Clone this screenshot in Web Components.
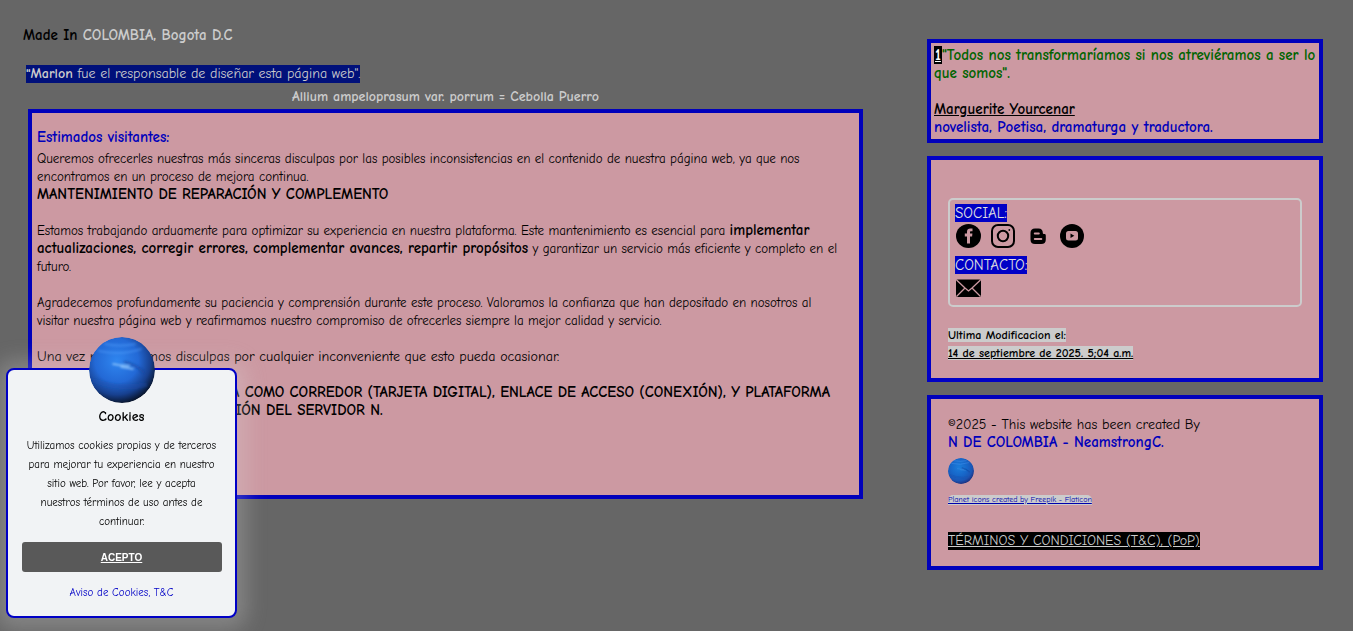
<!DOCTYPE html>
<html lang="es">
<head>
<meta charset="utf-8">
<meta name="viewport" content="width=device-width, initial-scale=1">
<title>N DE COLOMBIA - NeamstrongC.</title>
<style>
  :root {
    --blue: #0000bb;
    --pink: #cc99a2;
    --silver: #cccccc;
    --font: "Comic Sans MS", "Comic Neue", Lato, sans-serif;
  }
  body {
    margin: 0;
    background: #666;
    color: #000;
    font: 14px/18px var(--font);
  }
</style>
</head>
<body>
<page-layout>
  <intro-header slot="main"></intro-header>
  <notice-article slot="main"></notice-article>
  <quote-card slot="aside"></quote-card>
  <social-card slot="aside"></social-card>
  <credits-card slot="aside"></credits-card>
</page-layout>
<cookie-card></cookie-card>

<script>
const define = (name, html) => {
  const template = document.createElement("template");
  template.innerHTML = html;
  customElements.define(name, class extends HTMLElement {
    constructor() {
      super();
      this.attachShadow({ mode: "open" }).append(template.content.cloneNode(true));
    }
  });
};

define("page-layout", `
<style>
  :host { display: grid; grid-template-columns: minmax(0, 1fr) 396px; gap: 64px; align-items: start; padding: 26px 30px 26px 28px; }
  main { min-width: 0; }
  aside { display: flex; flex-direction: column; gap: 13px; padding-top: 13px; }
</style>
<main><slot name="main"></slot></main>
<aside><slot name="aside"></slot></aside>`);

define("framed-box", `
<style>
  :host { display: block; border: 4px solid var(--blue); background: var(--pink); }
</style>
<slot></slot>`);

define("intro-header", `
<style>
  :host { display: block; color: var(--silver); }
  p, h1 { margin: 0; font-size: 14px; line-height: 18px; }
  .origin { margin: 0 0 21px -5px; font-size: 15px; font-weight: bold; }
  .origin span { color: #000; }
  .author { margin-left: -2px; }
  mark { display: inline-block; background: #00107a; color: var(--silver); }
  h1 { padding: 5px 0 3px; text-align: center; }
</style>
<p class="origin"><span>Made In</span> COLOMBIA, Bogota D.C</p>
<p class="author"><mark><b>"Marlon</b> fue el responsable de diseñar esta página web".</mark></p>
<h1>Allium ampeloprasum var. porrum = Cebolla Puerro</h1>`);

define("notice-article", `
<style>
  :host { display: block; }
  framed-box { padding: 15px 12px 75px 5px; }
  h2 { margin: 0 0 4px; font-size: 15px; line-height: 18px; color: var(--blue); }
  p { margin: 0 0 18px; font-size: 13px; }
  p.apology { font-size: 14px; }
  b { font-size: 15px; line-height: 14px; }
  p:last-child { margin: 0; }
</style>
<framed-box>
  <h2>Estimados visitantes:</h2>
  <p>Queremos ofrecerles nuestras más sinceras disculpas por las posibles inconsistencias en el contenido de nuestra página web, ya que nos encontramos en un proceso de mejora continua.<br><b>MANTENIMIENTO DE REPARACIÓN Y COMPLEMENTO</b></p>
  <p>Estamos trabajando arduamente para optimizar su experiencia en nuestra plataforma. Este mantenimiento es esencial para <b>implementar actualizaciones, corregir errores, complementar avances, repartir propósitos</b> y garantizar un servicio más eficiente y completo en el futuro.</p>
  <p>Agradecemos profundamente su paciencia y comprensión durante este proceso. Valoramos la confianza que han depositado en nosotros al visitar nuestra página web y reafirmamos nuestro compromiso de ofrecerles siempre la mejor calidad y servicio.</p>
  <p class="apology">Una vez más, pedimos disculpas por cualquier inconveniente que esto pueda ocasionar.</p>
  <p><b>UNA PÁGINA WEB SE UTILIZA COMO CORREDOR (TARJETA DIGITAL), ENLACE DE ACCESO (CONEXIÓN), Y PLATAFORMA PARA NUESTRA ADMINISTRACIÓN DEL SERVIDOR N.</b></p>
</framed-box>`);

define("quote-card", `
<style>
  :host { display: block; font-size: 15px; font-weight: bold; }
  framed-box { padding: 3px; }
  blockquote { margin: 0 0 18px; color: #006400; }
  .number { display: inline-block; padding: 0 1px; background: #000; color: #fff; text-decoration: underline; }
  p { margin: 0; color: var(--blue); }
  a { color: #000; }
</style>
<framed-box>
  <blockquote><span class="number">1</span>"Todos nos transformaríamos si nos atreviéramos a ser lo que somos".</blockquote>
  <p><a href="#yourcenar">Marguerite Yourcenar</a><br>novelista, Poetisa, dramaturga y traductora.</p>
</framed-box>`);

define("social-card", `
<style>
  :host { display: block; --blue: #0000c6; }
  framed-box { padding: 38px 17px 16px; }
  section { border: 2px solid var(--silver); border-radius: 5px; padding: 4px 5px; margin-bottom: 19px; }
  h3 { margin: 0; font-weight: normal; font-size: 15px; line-height: 18px; }
  h3 span { display: inline-block; background: var(--blue); color: #e0e0e0; }
  nav { display: flex; gap: 9px; padding: 2px 0 7px; }
  nav.mail { padding: 2px 0 0; }
  a { display: block; height: 25px; color: #000; }
  svg { display: block; width: 26px; height: 25px; }
  p { margin: 0; font-size: 12px; line-height: 18px; font-weight: bold; }
  p span { background: var(--silver); }
</style>
<framed-box>
  <section>
    <h3><span>SOCIAL:</span></h3>
    <nav aria-label="Social">
      <a href="#facebook" aria-label="Facebook"><svg viewBox="0 0 26 25"><ellipse cx="13.500" cy="12" rx="12.500" ry="12"/><path d="M12 19.500v-7H9.800v-3H12V7.800C12 5.500 13.300 4.500 15.300 4.500H17.500v2.700h-1.400c-.9 0-1.100.4-1.100 1.200V9.500h2.400l-.3 3H15v7z" fill="#cc99a2"/></svg></a>
      <a href="#instagram" aria-label="Instagram"><svg viewBox="0 0 26 25" fill="none" stroke="#000" stroke-width="2"><rect x="2" y="1" width="22" height="22" rx="6"/><circle cx="13" cy="12" r="5.200"/><circle cx="19.300" cy="6" r=".9" fill="#000" stroke="none"/></svg></a>
      <a href="#blogger" aria-label="Blogger"><svg viewBox="0 0 26 25"><path d="M5.500 9c0-2.800 1.500-4.500 4.500-4.500h3.500c3 0 4.300 1.800 4.300 4.200 0 1.200.6 1.300 1.500 1.300 1.200 0 1.500.7 1.500 1.700V15.500c0 3-1.600 4.500-4.600 4.500H10c-3 0-4.500-1.500-4.500-4.500z"/><path d="M9.800 9.400h4M9.800 15.100h6.500" stroke="#cc99a2" stroke-width="2" stroke-linecap="round"/></svg></a>
      <a href="#youtube" aria-label="YouTube"><svg viewBox="0 0 26 25"><circle cx="12" cy="12" r="12"/><rect x="6" y="7" width="12" height="9.500" rx="2.500" fill="#cc99a2"/><path d="M10.500 9.500v4.500l3.800-2.200z"/></svg></a>
    </nav>
    <h3><span>CONTACTO:</span></h3>
    <nav class="mail" aria-label="Contacto">
      <a href="#correo" aria-label="Correo"><svg viewBox="0 0 26 25"><rect x="1" y="3.500" width="25" height="17.500" rx="1.500"/><path d="M1.500 4 10 12 13.500 15 17 12 25.500 4M1.500 20.500 10 12M25.500 20.500 17 12" fill="none" stroke="#cc99a2" stroke-width="1.300"/></svg></a>
    </nav>
  </section>
  <p><span>Ultima Modificacion el:</span></p>
  <p><span><u>14 de septiembre de 2025. 5;04 a.m.</u></span></p>
</framed-box>`);

define("planet-icon", `
<style>
  :host { display: block; width: 26px; height: 26px; }
  svg { display: block; width: 100%; height: 100%; }
  .core { stop-color: var(--planet-core, #2f86f0); }
  .mid { stop-color: var(--planet-mid, #2369d6); }
  .shade { stop-color: var(--planet-shade, #17408f); }
  .limb { stop-color: var(--planet-limb, #081226); }
  .storm { opacity: var(--planet-storm, .9); }
</style>
<svg viewBox="0 0 66 66" aria-hidden="true">
  <defs>
    <radialGradient id="body" cx=".42" cy=".36" r=".66">
      <stop class="core" offset="0"/><stop class="mid" offset=".5"/>
      <stop class="shade" offset=".78"/><stop class="limb" offset="1"/>
    </radialGradient>
    <filter id="soft"><feGaussianBlur stdDeviation=".8"/></filter>
    <clipPath id="disc"><circle cx="33" cy="33" r="33"/></clipPath>
  </defs>
  <g clip-path="url(#disc)">
    <circle cx="33" cy="33" r="33" fill="url(#body)"/>
    <g fill="none" stroke-linecap="round" filter="url(#soft)">
      <path d="M10 14q22 5 42-2M16 7q16 3 30 0" stroke="#5ba6ff" stroke-width="2" opacity=".4"/>
      <path d="M6 44q26 9 50 4" stroke="#164fae" stroke-width="5" opacity=".35"/>
      <path class="storm" d="M24 27l6 1 10 1M32 30l12 2" stroke="#9ccfff" stroke-width="1.500"/>
      <path d="M36 25q12 3 18 10" stroke="#123c90" stroke-width="3" opacity=".4"/>
    </g>
  </g>
</svg>`);

define("credits-card", `
<style>
  :host { display: block; }
  framed-box { padding: 17px 17px 16px; }
  p { margin: 0; }
  strong { font-size: 15px; line-height: 14px; color: var(--blue); }
  planet-icon { margin: 6px 0 11px; --planet-core: #1b7ddb; --planet-mid: #1766c8; --planet-shade: #1b55b4; --planet-limb: #1d2f7c; --planet-storm: .2; }
  .source { display: block; width: fit-content; font-size: 8px; line-height: 10px; color: #0000ad; background: var(--silver); border-radius: 5px 5px 0 0; }
  .terms { display: block; width: fit-content; margin-top: 27px; font-size: 14px; line-height: 18px; background: #000; color: var(--silver); }
</style>
<framed-box>
  <p>©2025 - This website has been created By<br><strong>N DE COLOMBIA - NeamstrongC.</strong></p>
  <planet-icon></planet-icon>
  <a class="source" href="#flaticon">Planet icons created by Freepik - Flaticon</a>
  <a class="terms" href="#terminos">TÉRMINOS Y CONDICIONES (T&amp;C), (PoP)</a>
</framed-box>`);

define("cookie-card", `
<style>
  :host {
    position: fixed; left: 6px; bottom: 13px; width: 231px; box-sizing: border-box;
    padding: 38px 13px 13px; border: 2px solid #0000c6; border-radius: 8px;
    background: #f1f3f5; text-align: center; box-shadow: 0 2px 20px 10px rgba(222, 222, 222, .25);
  }
  planet-icon { position: absolute; top: -33px; left: 0; right: 0; margin: 0 auto; width: 66px; height: 66px; }
  h2 { margin: 0 0 10px; font-size: 14px; line-height: 18px; }
  p { margin: 0 0 11px; font-size: 11px; line-height: 19px; }
  button { display: block; width: 200px; height: 30px; margin: 0 auto 11px; padding: 0; border: 0; border-radius: 3px; background: #595959; color: #fff; font: bold 10px "Liberation Sans", Arial, sans-serif; text-decoration: underline; }
  a { display: block; color: #0000c6; font-size: 11px; line-height: 20px; text-decoration: none; }
</style>
<planet-icon></planet-icon>
<h2>Cookies</h2>
<p>Utilizamos cookies propias y de terceros para mejorar tu experiencia en nuestro sitio web. Por favor, lee y acepta<br>nuestros términos de uso antes de continuar.</p>
<button type="button">ACEPTO</button>
<a href="#aviso">Aviso de Cookies, T&amp;C</a>`);
</script>
</body>
</html>
